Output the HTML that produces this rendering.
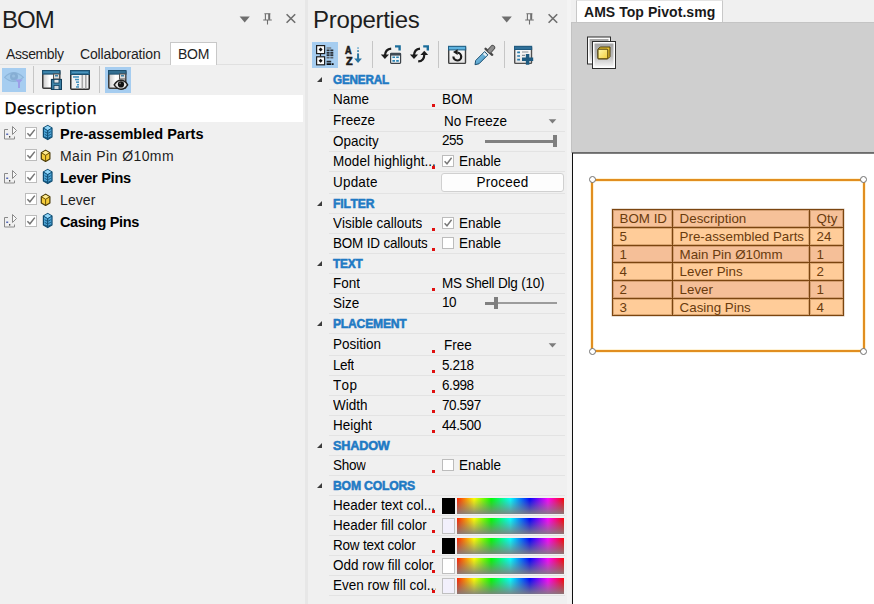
<!DOCTYPE html>
<html><head><meta charset="utf-8"><title>BOM Properties</title>
<style>
*{box-sizing:border-box;margin:0;padding:0}
html,body{width:874px;height:604px;overflow:hidden;background:#f0f0f0}
body{position:relative;font-family:"Liberation Sans",sans-serif;color:#000;font-size:13px}
div,svg,span{position:absolute}
.t{white-space:nowrap;line-height:1}
.title{font-size:24px;color:#1e1e1e}
.tab{font-size:14px;color:#1e1e1e}
.hl{background:#a6cdf0}
.sep{width:1px;background:#c6c6c6}
.pl{left:329px;width:236px;height:1px;background:#e3e3e3}
.sec{left:333px;font-weight:bold;font-size:12.5px;font-kerning:none;letter-spacing:-0.2px;color:#217bc4;white-space:nowrap;line-height:1;transform-origin:0 0;-webkit-text-stroke:0.55px #1f79c4}
.pn{left:333px;clip-path:inset(-4px 0 -6px 0);max-width:110.8px;font-size:14.6px;transform:scaleX(0.925);transform-origin:0 0;font-kerning:none;white-space:nowrap;line-height:1}
.pv{left:442px;font-size:14.6px;transform:scaleX(0.925);transform-origin:0 0;font-kerning:none;white-space:nowrap;line-height:1}
.tri{left:317px;width:0;height:0;border-left:5.2px solid transparent;border-bottom:5.2px solid #3c3c3c}
.dot{left:432px;width:3px;height:3px;background:#e01010}
.cb{width:12px;height:12px;border:1px solid #bcbcbc;background:#fff}
.rb{left:457px;width:107px;height:16px;background:linear-gradient(to bottom,rgba(128,128,128,0) 0%,rgba(128,128,128,.9) 100%),linear-gradient(to right,#ff2000 0%,#ffff00 16%,#00ff00 32%,#00ffff 50%,#0000ff 68%,#ff00ff 85%,#ff0000 100%)}
.sw{left:441.5px;width:13.5px;height:16px;border:1px solid #c0c0c0}
.tr{font-size:14px;white-space:nowrap;line-height:1}
.b{font-weight:bold}
.bt{font-kerning:none;font-size:13.33px;color:#693b0e;white-space:nowrap;line-height:1}
</style></head><body>
<div style="left:305px;top:0;width:3px;height:604px;background:#e7e7e7"></div>
<div class="t title" style="left:2px;top:8px;letter-spacing:-1px">BOM</div>
<svg style="left:238px;top:10px" width="62" height="18" viewBox="0 0 62 18">
<path d="M1.6 6.6h10.2l-5.1 6z" fill="#6e6e6e"/>
<path d="M26.4 3.8h6M27.4 3.8v6M25.2 10h8.6M29.5 10v4.6" stroke="#6e6e6e" stroke-width="1.1" fill="none"/>
<path d="M31.2 3.8v6" stroke="#6e6e6e" stroke-width="2" fill="none"/>
<path d="M48.6 4.2l8.6 8.6M57.2 4.2l-8.6 8.6" stroke="#6e6e6e" stroke-width="1.6" fill="none"/>
</svg>
<div style="left:0;top:64px;width:303px;height:1px;background:#e0e0e0"></div>
<div style="left:170px;top:42px;width:47px;height:23px;background:#fff;border:1px solid #c8c8c8;border-bottom:none"></div>
<div class="t tab" style="left:6px;top:47px;letter-spacing:-0.4px">Assembly</div>
<div class="t tab" style="left:80px;top:47px;letter-spacing:-0.15px">Collaboration</div>
<div class="t tab" style="left:178px;top:47px;letter-spacing:-0.3px">BOM</div>
<div class="hl" style="left:2px;top:68px;width:24px;height:24px"></div>
<div class="sep" style="left:33px;top:66px;height:27px"></div>
<div class="sep" style="left:99px;top:66px;height:27px"></div>
<div class="hl" style="left:105px;top:67px;width:26px;height:26px"></div>
<svg style="left:4px;top:70px" width="22" height="22" viewBox="0 0 22 22">
<path d="M0.6 7.4 Q9.5 -2 19.4 7.4 Q9.5 15.4 0.6 7.4z" fill="#a0c8ea" stroke="#8db5da" stroke-width="1.2"/>
<circle cx="10" cy="6.4" r="4" fill="#86aed4"/>
<circle cx="9.6" cy="6" r="1.6" fill="#98bee0"/>
<path d="M11.2 9.6h7.6l-2.8 3v5.4h-2v-5.4z" fill="#9c9fe8"/>
</svg>
<svg style="left:42px;top:70px" width="20" height="20" viewBox="0 0 20 20">
<defs><linearGradient id="g1" x1="0" y1="0" x2="1" y2="0"><stop offset="0" stop-color="#c8c8c8"/><stop offset="0.4" stop-color="#ffffff"/><stop offset="1" stop-color="#e8e8e8"/></linearGradient></defs>
<rect x="0.75" y="0.75" width="17" height="17.5" rx="1" fill="url(#g1)" stroke="#3c3c3c" stroke-width="1.5"/>
<rect x="0.5" y="0.5" width="17.5" height="3.6" fill="#2f7298" stroke="#1d4f6e" stroke-width="1"/>
<rect x="1.5" y="1.6" width="15.5" height="1" fill="#4a94bc"/>
<rect x="11.5" y="4" width="6" height="5" fill="#dcdcdc" stroke="#555" stroke-width="1"/>
<rect x="13" y="5" width="3" height="1.5" fill="#3a82a8"/>
<rect x="9.5" y="9.5" width="10" height="10" fill="#3f86ab" stroke="#123f5c" stroke-width="1.2"/>
<rect x="12" y="9.5" width="5" height="3.5" fill="#e0e6ea" stroke="#123f5c" stroke-width="0.8"/>
<rect x="12" y="15.5" width="5" height="4" fill="#cfd8de" stroke="#123f5c" stroke-width="0.8"/>
</svg>
<svg style="left:70px;top:70px" width="20" height="20" viewBox="0 0 20 20">
<rect x="0.75" y="0.75" width="18.5" height="18.5" rx="1" fill="#f2f2f2" stroke="#2e2e2e" stroke-width="1.5"/>
<rect x="0.5" y="0.5" width="19" height="4" fill="#2f7298" stroke="#1d4f6e" stroke-width="1"/>
<rect x="2" y="1.7" width="16" height="1.2" fill="#4f9ac2"/>
<rect x="11.5" y="5" width="1.6" height="13.5" fill="#a8a8a8"/>
<rect x="15" y="5" width="1.6" height="13.5" fill="#a8a8a8"/>
<rect x="3" y="6.2" width="6" height="1.5" fill="#3f8fbd"/>
<rect x="5" y="8.8" width="4" height="1.5" fill="#3f8fbd"/>
<rect x="6" y="11.4" width="3" height="1.5" fill="#3f8fbd"/>
<rect x="7" y="14" width="2" height="1.5" fill="#3f8fbd"/>
<rect x="6" y="16.2" width="3" height="1.5" fill="#3f8fbd"/>
</svg>
<svg style="left:108px;top:70px" width="21" height="21" viewBox="0 0 21 21">
<rect x="0.75" y="0.75" width="17" height="17.5" rx="1" fill="url(#g1)" stroke="#3c3c3c" stroke-width="1.5"/>
<rect x="0.5" y="0.5" width="17.5" height="3.6" fill="#336f92" stroke="#1d4f6e" stroke-width="1"/>
<rect x="11.5" y="4" width="6" height="5" fill="#dcdcdc" stroke="#555" stroke-width="1"/>
<rect x="13" y="5" width="3" height="1.5" fill="#3a82a8"/>
<path d="M6.2 14.9C8.2 11.4 10.6 10.3 12.9 10.3C15.4 10.3 17.8 11.6 19.6 14.9C17.8 18 15.4 19.2 12.9 19.2C10.6 19.2 8.2 18 6.2 14.9z" fill="#e6e6e6" stroke="#222" stroke-width="1.5"/>
<circle cx="13" cy="14.4" r="3.1" fill="#111"/>
<circle cx="12.1" cy="13.3" r="0.9" fill="#777"/>
</svg>
<div style="left:0;top:95px;width:303px;height:27px;background:#fff"></div>
<div id="desc" class="t" style="left:4.6px;top:101.6px;font-size:15.6px;letter-spacing:0.32px;-webkit-text-stroke:0.25px #000;font-family:'DejaVu Sans',sans-serif">Description</div>
<svg style="left:3px;top:125px" width="16" height="16" viewBox="0 0 16 16">
<path d="M5 4.5H1.5V14H11.5V11.5" fill="none" stroke="#8a8a8a" stroke-width="1"/>
<path d="M9.5 1.5L13.5 5.5L9.5 9.5z" fill="#f8f8f8" stroke="#8a8a8a" stroke-width="1"/>
<rect x="3.2" y="8.6" width="2" height="1.2" fill="#2f48a8"/>
<rect x="6" y="11.2" width="1.3" height="1.3" fill="#222"/>
</svg>
<svg style="left:40px;top:124px" width="16" height="18" viewBox="40 -9 16 18">
<path d="M47.7 -7.6L52 -5V4.1L47.7 6.6L43.4 4.1V-5z" fill="#4fa8da" stroke="#0d4a70" stroke-width="1.2" stroke-linejoin="round"/>
<path d="M47.7 -7.2L51.4 -5L47.7 -2.8L44 -5z" fill="#93d6f8"/>
<path d="M43.6 -4.8L47.7 -2.4L51.8 -4.8" fill="none" stroke="#0d4a70" stroke-width="1"/>
<path d="M47.7 -2.4V6.4" stroke="#0d4a70" stroke-width="1.1"/>
<path d="M44.6 -1.3L47 0M44.6 1.3L47 2.6M44.6 3.8L47 5M50.8 -1.3L48.4 0M50.8 1.3L48.4 2.6M50.8 3.8L48.4 5" stroke="#0d4a70" stroke-width="0.9"/>
</svg>
<div class="cb" style="left:25px;top:127px"></div><svg style="left:25px;top:127px" width="12" height="12" viewBox="0 0 12 12"><path d="M2.4 6.2L4.9 8.8L9.8 2.6" fill="none" stroke="#747474" stroke-width="1.45"/></svg>
<div class="tr b" style="left:60px;top:127px;font-size:14.5px;letter-spacing:0px">Pre-assembled Parts</div>
<svg style="left:38px;top:146px" width="16" height="18" viewBox="38 -9 16 18">
<path d="M45.6 -4.8L49.9 -2.3V3.9L45.6 6.5L41.3 3.9V-2.3z" fill="#f4cb3a" stroke="#4a3a06" stroke-width="1.2" stroke-linejoin="round"/>
<path d="M45.6 -4.2L49 -2.2L45.6 -0.2L42.2 -2.2z" fill="#fdeb94"/>
<path d="M41.8 -2L45.6 0.3L49.4 -2M45.6 0.3V6" fill="none" stroke="#6a5208" stroke-width="1"/>
</svg>
<div class="cb" style="left:25px;top:149px"></div><svg style="left:25px;top:149px" width="12" height="12" viewBox="0 0 12 12"><path d="M2.4 6.2L4.9 8.8L9.8 2.6" fill="none" stroke="#747474" stroke-width="1.45"/></svg>
<div class="tr" style="left:60px;top:149.4px;color:#1e1e1e;letter-spacing:0.42px">Main Pin Ø10mm</div>
<svg style="left:3px;top:169px" width="16" height="16" viewBox="0 0 16 16">
<path d="M5 4.5H1.5V14H11.5V11.5" fill="none" stroke="#8a8a8a" stroke-width="1"/>
<path d="M9.5 1.5L13.5 5.5L9.5 9.5z" fill="#f8f8f8" stroke="#8a8a8a" stroke-width="1"/>
<rect x="3.2" y="8.6" width="2" height="1.2" fill="#2f48a8"/>
<rect x="6" y="11.2" width="1.3" height="1.3" fill="#222"/>
</svg>
<svg style="left:40px;top:168px" width="16" height="18" viewBox="40 -9 16 18">
<path d="M47.7 -7.6L52 -5V4.1L47.7 6.6L43.4 4.1V-5z" fill="#4fa8da" stroke="#0d4a70" stroke-width="1.2" stroke-linejoin="round"/>
<path d="M47.7 -7.2L51.4 -5L47.7 -2.8L44 -5z" fill="#93d6f8"/>
<path d="M43.6 -4.8L47.7 -2.4L51.8 -4.8" fill="none" stroke="#0d4a70" stroke-width="1"/>
<path d="M47.7 -2.4V6.4" stroke="#0d4a70" stroke-width="1.1"/>
<path d="M44.6 -1.3L47 0M44.6 1.3L47 2.6M44.6 3.8L47 5M50.8 -1.3L48.4 0M50.8 1.3L48.4 2.6M50.8 3.8L48.4 5" stroke="#0d4a70" stroke-width="0.9"/>
</svg>
<div class="cb" style="left:25px;top:171px"></div><svg style="left:25px;top:171px" width="12" height="12" viewBox="0 0 12 12"><path d="M2.4 6.2L4.9 8.8L9.8 2.6" fill="none" stroke="#747474" stroke-width="1.45"/></svg>
<div class="tr b" style="left:60px;top:171px;font-size:14.5px;letter-spacing:-0.25px">Lever Pins</div>
<svg style="left:38px;top:190px" width="16" height="18" viewBox="38 -9 16 18">
<path d="M45.6 -4.8L49.9 -2.3V3.9L45.6 6.5L41.3 3.9V-2.3z" fill="#f4cb3a" stroke="#4a3a06" stroke-width="1.2" stroke-linejoin="round"/>
<path d="M45.6 -4.2L49 -2.2L45.6 -0.2L42.2 -2.2z" fill="#fdeb94"/>
<path d="M41.8 -2L45.6 0.3L49.4 -2M45.6 0.3V6" fill="none" stroke="#6a5208" stroke-width="1"/>
</svg>
<div class="cb" style="left:25px;top:193px"></div><svg style="left:25px;top:193px" width="12" height="12" viewBox="0 0 12 12"><path d="M2.4 6.2L4.9 8.8L9.8 2.6" fill="none" stroke="#747474" stroke-width="1.45"/></svg>
<div class="tr" style="left:60px;top:193.4px;color:#1e1e1e;letter-spacing:0.1px">Lever</div>
<svg style="left:3px;top:213px" width="16" height="16" viewBox="0 0 16 16">
<path d="M5 4.5H1.5V14H11.5V11.5" fill="none" stroke="#8a8a8a" stroke-width="1"/>
<path d="M9.5 1.5L13.5 5.5L9.5 9.5z" fill="#f8f8f8" stroke="#8a8a8a" stroke-width="1"/>
<rect x="3.2" y="8.6" width="2" height="1.2" fill="#2f48a8"/>
<rect x="6" y="11.2" width="1.3" height="1.3" fill="#222"/>
</svg>
<svg style="left:40px;top:212px" width="16" height="18" viewBox="40 -9 16 18">
<path d="M47.7 -7.6L52 -5V4.1L47.7 6.6L43.4 4.1V-5z" fill="#4fa8da" stroke="#0d4a70" stroke-width="1.2" stroke-linejoin="round"/>
<path d="M47.7 -7.2L51.4 -5L47.7 -2.8L44 -5z" fill="#93d6f8"/>
<path d="M43.6 -4.8L47.7 -2.4L51.8 -4.8" fill="none" stroke="#0d4a70" stroke-width="1"/>
<path d="M47.7 -2.4V6.4" stroke="#0d4a70" stroke-width="1.1"/>
<path d="M44.6 -1.3L47 0M44.6 1.3L47 2.6M44.6 3.8L47 5M50.8 -1.3L48.4 0M50.8 1.3L48.4 2.6M50.8 3.8L48.4 5" stroke="#0d4a70" stroke-width="0.9"/>
</svg>
<div class="cb" style="left:25px;top:215px"></div><svg style="left:25px;top:215px" width="12" height="12" viewBox="0 0 12 12"><path d="M2.4 6.2L4.9 8.8L9.8 2.6" fill="none" stroke="#747474" stroke-width="1.45"/></svg>
<div class="tr b" style="left:60px;top:215px;font-size:14.5px;letter-spacing:-0.38px">Casing Pins</div>
<div class="t title" style="left:313px;top:8px;letter-spacing:-0.3px">Properties</div>
<svg style="left:499.8px;top:10px" width="62" height="18" viewBox="0 0 62 18">
<path d="M1.6 6.6h10.2l-5.1 6z" fill="#6e6e6e"/>
<path d="M26.4 3.8h6M27.4 3.8v6M25.2 10h8.6M29.5 10v4.6" stroke="#6e6e6e" stroke-width="1.1" fill="none"/>
<path d="M31.2 3.8v6" stroke="#6e6e6e" stroke-width="2" fill="none"/>
<path d="M48.6 4.2l8.6 8.6M57.2 4.2l-8.6 8.6" stroke="#6e6e6e" stroke-width="1.6" fill="none"/>
</svg>
<div class="hl" style="left:312px;top:42px;width:26px;height:26px"></div>
<div class="sep" style="left:372px;top:41px;height:27px"></div>
<div class="sep" style="left:438px;top:41px;height:27px"></div>
<div class="sep" style="left:504px;top:41px;height:27px"></div>
<svg style="left:308px;top:38px" width="260" height="34" viewBox="308 38 260 34">
<defs>
<linearGradient id="gw" x1="0" y1="0" x2="0" y2="1"><stop offset="0" stop-color="#ffffff"/><stop offset="1" stop-color="#e4e4e4"/></linearGradient>
<linearGradient id="gd" x1="0" y1="0" x2="1" y2="1"><stop offset="0" stop-color="#9ad4f2"/><stop offset="1" stop-color="#2f86b8"/></linearGradient>
</defs>
<!-- categorized -->
<path d="M320.5 53.5v3" stroke="#222" stroke-width="1.2"/>
<rect x="316.6" y="45.6" width="8" height="8" fill="#fafafa" stroke="#1e1e1e" stroke-width="1.2"/>
<rect x="316.6" y="56.8" width="8" height="8" fill="#fafafa" stroke="#1e1e1e" stroke-width="1.2"/>
<path d="M320.6 47.6l2 2l-2 2l-2-2zM320.6 58.8l2 2l-2 2l-2-2z" fill="#111"/>
<path d="M326.6 48h4.6" stroke="#76828c" stroke-width="1.6"/>
<path d="M326.6 50.4h7M326.6 52.8h7M326.6 55.2h7" stroke="#2a3138" stroke-width="1.7" stroke-dasharray="3 0.7"/>
<path d="M326.6 57.6h7" stroke="#5c666e" stroke-width="1.6" stroke-dasharray="3 0.7"/>
<path d="M326.6 61.6h4.6" stroke="#23282d" stroke-width="1.7"/>
<path d="M326.6 64.1h7" stroke="#0c0e10" stroke-width="1.7" stroke-dasharray="4.4 0.6"/>
<!-- sort arrow -->
<rect x="357.2" y="47.3" width="1.7" height="1.5" fill="#6aa9cc"/>
<rect x="357.2" y="50.2" width="1.7" height="1.7" fill="#2e7ba8"/>
<path d="M358.05 53.4v7" stroke="#2a76a4" stroke-width="2"/>
<path d="M354.2 58.6h7.7l-3.85 4.4z" fill="#2a76a4"/>
<!-- undo + table -->
<path d="M395 46.4h4.6v4.2" fill="none" stroke="#1b6d9b" stroke-width="2.4"/>
<rect x="390.6" y="53.3" width="10" height="10" rx="0.8" fill="#eef3f6" stroke="#3c4248" stroke-width="1.2"/>
<rect x="390.6" y="53" width="10" height="2.6" fill="#3f4a54"/>
<path d="M392.4 57.3h2.6M396.2 57.3h2.6M392.4 60.9h2.6M396.2 60.9h2.6" stroke="#2b84b4" stroke-width="1.6"/>
<path d="M391.2 48.6Q385.2 49.2 385 55.4" fill="none" stroke="#1c1c1c" stroke-width="2.2"/>
<path d="M380.8 54.6h8.2l-4.1 4.4z" fill="#1c1c1c"/>
<!-- sync -->
<path d="M423.2 46.4h4.6v4.2" fill="none" stroke="#1b6d9b" stroke-width="2.4"/>
<path d="M420 48.6Q414.2 49.2 414 55.4" fill="none" stroke="#1c1c1c" stroke-width="2.2"/>
<path d="M409.9 54.6h8.2l-4.1 4.4z" fill="#1c1c1c"/>
<path d="M418.2 61.4Q424.2 61.2 424.3 54.4" fill="none" stroke="#1c1c1c" stroke-width="2.2"/>
<path d="M420.4 55h7.8l-3.9-4.2z" fill="#1c1c1c"/>
<!-- reset window -->
<rect x="448.7" y="46.6" width="16.8" height="16.8" rx="0.8" fill="url(#gw)" stroke="#404040" stroke-width="1.4"/>
<rect x="448.5" y="46.3" width="17.2" height="3.6" fill="#5eb2de" stroke="#1f5f86" stroke-width="1"/>
<path d="M457.4 52.7A3.9 3.9 0 1 1 453.4 56.6" fill="none" stroke="#1a1a1a" stroke-width="2.2"/>
<path d="M457.6 49.3V55L453 52z" fill="#1a1a1a"/>
<!-- dropper -->
<path d="M475 64.7L475.7 60.5L484.6 51.6L487.9 54.9L479 63.8z" fill="url(#gd)" stroke="#1c4f70" stroke-width="1" stroke-linejoin="round"/>
<path d="M482.9 53.9L484.6 52.2L487.3 54.9L485.6 56.6z" fill="#e4ecf1"/>
<path d="M485.6 48.8L492.2 54.8" stroke="#484848" stroke-width="2.4" stroke-linecap="round"/>
<path d="M489.8 50.8L492.6 47.6" stroke="#505050" stroke-width="5.2" stroke-linecap="round"/>
<path d="M489.8 50.8L492.6 47.6" stroke="#8e8e8e" stroke-width="3.4" stroke-linecap="round"/>
<!-- table plus -->
<rect x="514.7" y="46.6" width="16.8" height="16.8" rx="0.8" fill="url(#gw)" stroke="#505050" stroke-width="1.4"/>
<rect x="514.5" y="46.3" width="17.2" height="3.2" fill="#2f7099" stroke="#1f5a80" stroke-width="1"/>
<path d="M517.2 52.4h2.8M517.2 56h2.8M517.2 59.6h2.8" stroke="#2a7cac" stroke-width="1.7"/>
<path d="M522 52h6.4M522 55.4h3" stroke="#8a9096" stroke-width="1.1"/>
<path d="M527.6 54v10.8M522 59.3h11.2" stroke="#1d5a80" stroke-width="3.5"/>
</svg>
<div class="t b" style="left:345.4px;top:45.6px;font-size:10px;color:#1c1c1c;-webkit-text-stroke:0.6px #1c1c1c;transform:scaleX(0.92);transform-origin:0 0">A</div>
<div class="t b" style="left:345.6px;top:56.8px;font-size:10px;color:#1c1c1c;-webkit-text-stroke:0.6px #1c1c1c;transform:scaleX(1.08);transform-origin:0 0">Z</div>
<div class="tri" style="top:76.6px"></div>
<div class="sec" style="top:74px;transform:scaleX(0.937)">GENERAL</div>
<div class="pl" style="top:89px"></div>
<div class="pn" style="top:91.7px;letter-spacing:0px">Name</div>
<div class="dot" style="top:104px"></div>
<div class="pv" style="top:91.7px;letter-spacing:0px">BOM</div>
<div class="pl" style="top:109px"></div>
<div class="pn" style="top:112.7px;letter-spacing:0px">Freeze</div>
<div class="pv" style="left:444px;top:113.7px">No Freeze</div>
<svg style="left:548px;top:118.7px" width="9" height="5" viewBox="0 0 9 5"><path d="M0.7 0.3h7.6L4.5 4.6z" fill="#7c7c7c"/></svg>
<div class="pl" style="top:131px"></div>
<div class="pn" style="top:133.7px;letter-spacing:0px">Opacity</div>
<div class="pv" style="top:132.7px;letter-spacing:-0.6px">255</div>
<div style="left:485px;top:139.9px;width:72px;height:2.1px;background:#9c9c9c"></div>
<div style="left:485px;top:140.0px;width:70.20000000000005px;height:3px;background:#808080"></div>
<div style="left:553.2px;top:135.4px;width:3.8px;height:12px;background:#7e7e7e"></div>
<div class="pl" style="top:151px"></div>
<div class="pn" style="top:153.7px;letter-spacing:0.05px">Model highlight...</div>
<div class="dot" style="top:166px"></div>
<div class="cb" style="left:442px;top:154.6px;width:12px;height:12px"></div>
<svg style="left:442px;top:154.6px" width="12" height="12" viewBox="0 0 12 12"><path d="M2.6 6.2L5 8.8L9.6 2.8" fill="none" stroke="#787878" stroke-width="1.4"/></svg>
<div class="pv" style="left:459px;top:153.7px">Enable</div>
<div class="pl" style="top:171px"></div>
<div class="pn" style="top:174.7px;letter-spacing:0.2px">Update</div>
<div style="left:441px;top:173px;width:123px;height:19px;background:#fdfdfd;border:1px solid #d0d0d0;border-radius:3px"></div>
<div class="pv" style="left:441px;width:123px;text-align:center;top:174.7px;font-size:14.6px;letter-spacing:0.3px;transform-origin:50% 0">Proceed</div>
<div class="pl" style="top:193px"></div>
<div class="tri" style="top:200.6px"></div>
<div class="sec" style="top:198px;transform:scaleX(0.97)">FILTER</div>
<div class="pl" style="top:213px"></div>
<div class="pn" style="top:215.7px;letter-spacing:0px">Visible callouts</div>
<div class="dot" style="top:228px"></div>
<div class="cb" style="left:442px;top:216.6px;width:12px;height:12px"></div>
<svg style="left:442px;top:216.6px" width="12" height="12" viewBox="0 0 12 12"><path d="M2.6 6.2L5 8.8L9.6 2.8" fill="none" stroke="#787878" stroke-width="1.4"/></svg>
<div class="pv" style="left:459px;top:215.7px">Enable</div>
<div class="pl" style="top:233px"></div>
<div class="pn" style="top:235.7px;letter-spacing:-0.21px">BOM ID callouts</div>
<div class="dot" style="top:248px"></div>
<div class="cb" style="left:442px;top:236.6px;width:12px;height:12px"></div>
<div class="pv" style="left:459px;top:235.7px">Enable</div>
<div class="pl" style="top:253px"></div>
<div class="tri" style="top:260.6px"></div>
<div class="sec" style="top:258px;transform:scaleX(0.95)">TEXT</div>
<div class="pl" style="top:273px"></div>
<div class="pn" style="top:275.7px;letter-spacing:0px">Font</div>
<div class="dot" style="top:288px"></div>
<div class="pv" style="top:275.7px;letter-spacing:-0.22px">MS Shell Dlg (10)</div>
<div class="pl" style="top:293px"></div>
<div class="pn" style="top:295.7px;letter-spacing:0px">Size</div>
<div class="pv" style="top:294.7px;letter-spacing:-0.6px">10</div>
<div style="left:485px;top:301.9px;width:72px;height:2.1px;background:#9c9c9c"></div>
<div style="left:485px;top:302.0px;width:10.74799999999999px;height:3px;background:#808080"></div>
<div style="left:493.748px;top:297.4px;width:3.8px;height:12px;background:#7e7e7e"></div>
<div class="pl" style="top:313px"></div>
<div class="tri" style="top:320.6px"></div>
<div class="sec" style="top:318px;transform:scaleX(0.967)">PLACEMENT</div>
<div class="pl" style="top:333px"></div>
<div class="pn" style="top:336.7px;letter-spacing:0px">Position</div>
<div class="dot" style="top:350px"></div>
<div class="pv" style="left:444px;top:337.7px">Free</div>
<svg style="left:548px;top:342.7px" width="9" height="5" viewBox="0 0 9 5"><path d="M0.7 0.3h7.6L4.5 4.6z" fill="#7c7c7c"/></svg>
<div class="pl" style="top:355px"></div>
<div class="pn" style="top:357.7px;letter-spacing:-0.45px">Left</div>
<div class="dot" style="top:370px"></div>
<div class="pv" style="top:357.7px;letter-spacing:-0.45px">5.218</div>
<div class="pl" style="top:375px"></div>
<div class="pn" style="top:377.7px;letter-spacing:0.35px">Top</div>
<div class="dot" style="top:390px"></div>
<div class="pv" style="top:377.7px;letter-spacing:-0.45px">6.998</div>
<div class="pl" style="top:395px"></div>
<div class="pn" style="top:397.7px;letter-spacing:0px">Width</div>
<div class="dot" style="top:410px"></div>
<div class="pv" style="top:397.7px;letter-spacing:-0.45px">70.597</div>
<div class="pl" style="top:415px"></div>
<div class="pn" style="top:417.7px;letter-spacing:0px">Height</div>
<div class="dot" style="top:430px"></div>
<div class="pv" style="top:417.7px;letter-spacing:-0.45px">44.500</div>
<div class="pl" style="top:435px"></div>
<div class="tri" style="top:442.6px"></div>
<div class="sec" style="top:440px;transform:scaleX(1.015)">SHADOW</div>
<div class="pl" style="top:455px"></div>
<div class="pn" style="top:457.7px;letter-spacing:-0.3px">Show</div>
<div class="dot" style="top:470px"></div>
<div class="cb" style="left:442px;top:458.6px;width:12px;height:12px"></div>
<div class="pv" style="left:459px;top:457.7px">Enable</div>
<div class="pl" style="top:475px"></div>
<div class="tri" style="top:482.6px"></div>
<div class="sec" style="top:480px;transform:scaleX(0.975)">BOM COLORS</div>
<div class="pl" style="top:495px"></div>
<div class="pn" style="top:497.7px;letter-spacing:0px">Header text col...</div>
<div class="dot" style="top:510px"></div>
<div class="sw" style="top:498px;background:#000000;border-color:#000"></div>
<div class="rb" style="top:498px"></div>
<div class="pl" style="top:515px"></div>
<div class="pn" style="top:517.7px;letter-spacing:0px">Header fill color</div>
<div class="dot" style="top:530px"></div>
<div class="sw" style="top:518px;background:#f2f0fc"></div>
<div class="rb" style="top:518px"></div>
<div class="pl" style="top:535px"></div>
<div class="pn" style="top:537.7px;letter-spacing:-0.22px">Row text color</div>
<div class="dot" style="top:550px"></div>
<div class="sw" style="top:538px;background:#000000;border-color:#000"></div>
<div class="rb" style="top:538px"></div>
<div class="pl" style="top:555px"></div>
<div class="pn" style="top:557.7px;letter-spacing:0px">Odd row fill color</div>
<div class="dot" style="top:570px"></div>
<div class="sw" style="top:558px;background:#ffffff"></div>
<div class="rb" style="top:558px"></div>
<div class="pl" style="top:575px"></div>
<div class="pn" style="top:577.7px;letter-spacing:0px">Even row fill col...</div>
<div class="dot" style="top:590px"></div>
<div class="sw" style="top:578px;background:#f2f0fc"></div>
<div class="rb" style="top:578px"></div>
<div class="pl" style="top:595px"></div>
<div style="left:567px;top:0;width:4px;height:604px;background:#f4f4f4"></div>
<div style="left:571px;top:22px;width:303px;height:131px;background:#cfcfcf;border-left:1px solid #c2c2c2;border-top:1px solid #c4c4c4"></div>
<div style="left:576px;top:0px;width:147px;height:22px;background:#fff;border:1px solid #c8c8c8;border-bottom:none;border-top-color:#e4e4e4"></div>
<div class="t b" style="left:584px;top:5px;font-size:14px;color:#1a1a1a;letter-spacing:0.05px">AMS Top Pivot.smg</div>
<div style="left:572px;top:152px;width:302px;height:452px;background:#fff"></div>
<div style="left:572px;top:152px;width:302px;height:2px;background:linear-gradient(#606060,#8a8a8a)"></div>
<div style="left:572px;top:152.5px;width:1px;height:452px;background:#101010"></div>
<svg style="left:580px;top:30px" width="44" height="44" viewBox="580 30 44 44">
<defs><linearGradient id="gf" x1="0" y1="0" x2="0" y2="1"><stop offset="0" stop-color="#a6a6a6"/><stop offset="0.55" stop-color="#bcbcbc"/><stop offset="1" stop-color="#f2f2f2"/></linearGradient>
<linearGradient id="gy" x1="0" y1="0" x2="1" y2="1"><stop offset="0" stop-color="#fff9b0"/><stop offset="1" stop-color="#f3cf3a"/></linearGradient></defs>
<rect x="587.5" y="37" width="23" height="27" fill="#fdfdfd" stroke="#2e2e2e" stroke-width="1"/>
<rect x="589.5" y="39" width="19" height="23" fill="url(#gf)"/>
<rect x="592.5" y="41.5" width="23" height="27" fill="#fdfdfd" stroke="#2e2e2e" stroke-width="1"/>
<rect x="594.5" y="43.5" width="19" height="23" fill="url(#gf)"/>
<path d="M598 49.2L600.2 47H610V56.6L607.8 58.8H598z" fill="#e9c232" stroke="#4f3e06" stroke-width="1" stroke-linejoin="round"/>
<rect x="598" y="49.2" width="9.8" height="9.6" rx="0.8" fill="url(#gy)" stroke="#4f3e06" stroke-width="1"/>
</svg>
<div style="left:591px;top:178.9px;width:274px;height:173.3px;border:2px solid #e18e20;box-shadow:0 0 0 1px rgba(255,226,160,.45),inset 0 0 0 1px rgba(255,226,160,.45)"></div>
<div style="left:588.5px;top:176.3px;width:7px;height:7px;border-radius:50%;background:#fff;border:1px solid #707070"></div>
<div style="left:860.3px;top:176.3px;width:7px;height:7px;border-radius:50%;background:#fff;border:1px solid #707070"></div>
<div style="left:588.5px;top:347.7px;width:7px;height:7px;border-radius:50%;background:#fff;border:1px solid #707070"></div>
<div style="left:860.3px;top:347.7px;width:7px;height:7px;border-radius:50%;background:#fff;border:1px solid #707070"></div>
<div style="left:612px;top:209px;width:232px;height:107px;background:#7b4510;box-shadow:0 0 0 0.5px rgba(123,69,16,.35)"></div>
<div style="left:613px;top:210px;width:59px;height:17px;background:#f6c199;box-shadow:inset 0 0 0 1px rgba(123,69,16,.28)"></div>
<div class="bt" style="left:619.6px;top:212.4px">BOM ID</div>
<div style="left:673px;top:210px;width:136px;height:17px;background:#f6c199;box-shadow:inset 0 0 0 1px rgba(123,69,16,.28)"></div>
<div class="bt" style="left:679.6px;top:212.4px">Description</div>
<div style="left:810px;top:210px;width:33px;height:17px;background:#f6c199;box-shadow:inset 0 0 0 1px rgba(123,69,16,.28)"></div>
<div class="bt" style="left:816.6px;top:212.4px">Qty</div>
<div style="left:613px;top:228px;width:59px;height:17px;background:#ffcc99;box-shadow:inset 0 0 0 1px rgba(123,69,16,.28)"></div>
<div class="bt" style="left:619.6px;top:230.4px">5</div>
<div style="left:673px;top:228px;width:136px;height:17px;background:#ffcc99;box-shadow:inset 0 0 0 1px rgba(123,69,16,.28)"></div>
<div class="bt" style="left:679.6px;top:230.4px">Pre-assembled Parts</div>
<div style="left:810px;top:228px;width:33px;height:17px;background:#ffcc99;box-shadow:inset 0 0 0 1px rgba(123,69,16,.28)"></div>
<div class="bt" style="left:816.6px;top:230.4px">24</div>
<div style="left:613px;top:246px;width:59px;height:16px;background:#f5bf98;box-shadow:inset 0 0 0 1px rgba(123,69,16,.28)"></div>
<div class="bt" style="left:619.6px;top:248.4px">1</div>
<div style="left:673px;top:246px;width:136px;height:16px;background:#f5bf98;box-shadow:inset 0 0 0 1px rgba(123,69,16,.28)"></div>
<div class="bt" style="left:679.6px;top:248.4px">Main Pin Ø10mm</div>
<div style="left:810px;top:246px;width:33px;height:16px;background:#f5bf98;box-shadow:inset 0 0 0 1px rgba(123,69,16,.28)"></div>
<div class="bt" style="left:816.6px;top:248.4px">1</div>
<div style="left:613px;top:263px;width:59px;height:17px;background:#ffcc99;box-shadow:inset 0 0 0 1px rgba(123,69,16,.28)"></div>
<div class="bt" style="left:619.6px;top:265.4px">4</div>
<div style="left:673px;top:263px;width:136px;height:17px;background:#ffcc99;box-shadow:inset 0 0 0 1px rgba(123,69,16,.28)"></div>
<div class="bt" style="left:679.6px;top:265.4px">Lever Pins</div>
<div style="left:810px;top:263px;width:33px;height:17px;background:#ffcc99;box-shadow:inset 0 0 0 1px rgba(123,69,16,.28)"></div>
<div class="bt" style="left:816.6px;top:265.4px">2</div>
<div style="left:613px;top:281px;width:59px;height:17px;background:#f5bf98;box-shadow:inset 0 0 0 1px rgba(123,69,16,.28)"></div>
<div class="bt" style="left:619.6px;top:283.4px">2</div>
<div style="left:673px;top:281px;width:136px;height:17px;background:#f5bf98;box-shadow:inset 0 0 0 1px rgba(123,69,16,.28)"></div>
<div class="bt" style="left:679.6px;top:283.4px">Lever</div>
<div style="left:810px;top:281px;width:33px;height:17px;background:#f5bf98;box-shadow:inset 0 0 0 1px rgba(123,69,16,.28)"></div>
<div class="bt" style="left:816.6px;top:283.4px">1</div>
<div style="left:613px;top:299px;width:59px;height:16px;background:#ffcc99;box-shadow:inset 0 0 0 1px rgba(123,69,16,.28)"></div>
<div class="bt" style="left:619.6px;top:301.4px">3</div>
<div style="left:673px;top:299px;width:136px;height:16px;background:#ffcc99;box-shadow:inset 0 0 0 1px rgba(123,69,16,.28)"></div>
<div class="bt" style="left:679.6px;top:301.4px">Casing Pins</div>
<div style="left:810px;top:299px;width:33px;height:16px;background:#ffcc99;box-shadow:inset 0 0 0 1px rgba(123,69,16,.28)"></div>
<div class="bt" style="left:816.6px;top:301.4px">4</div>
</body></html>
